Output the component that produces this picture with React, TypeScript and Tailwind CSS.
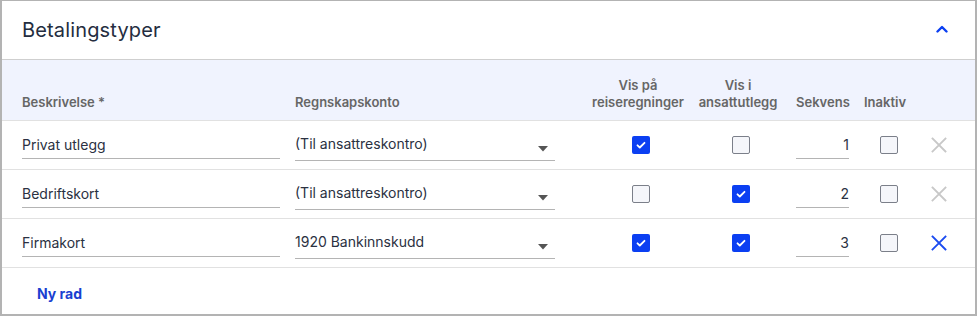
const rows = [
  { name: 'Privat utlegg', account: '(Til ansattreskontro)', travel: true, expense: false, seq: 1, inactive: false, removable: false },
  { name: 'Bedriftskort', account: '(Til ansattreskontro)', travel: false, expense: true, seq: 2, inactive: false, removable: false },
  { name: 'Firmakort', account: '1920 Bankinnskudd', travel: true, expense: true, seq: 3, inactive: false, removable: true },
]

function Checkbox({ checked }: { checked: boolean }) {
  if (checked) {
    return (
      <span className="w-[18px] h-[18px] rounded-[2px] bg-[#0b3ff2] flex items-center justify-center">
        <svg width="12" height="12" viewBox="0 0 12 12" fill="none">
          <path d="M2.5 6.3l2.3 2.2 4.7-4.7" stroke="white" strokeWidth="1.8" strokeLinecap="round" strokeLinejoin="round" />
        </svg>
      </span>
    )
  }
  return <span className="w-[18px] h-[18px] rounded-[2px] bg-[#f5f6fa] border border-[#7b7f89]" />
}

function CloseIcon({ active }: { active: boolean }) {
  return (
    <svg width="16" height="16" viewBox="0 0 16 16" fill="none">
      <path
        d="M1.5 1.5l13 13M14.5 1.5l-13 13"
        stroke={active ? '#1b4bf0' : '#c8c8c8'}
        strokeWidth="1.8"
        strokeLinecap="square"
      />
    </svg>
  )
}

export default function App() {
  return (
    <div className="w-[978px] h-[317px] bg-white" style={{ fontFamily: 'Inter, "Noto Sans", sans-serif' }}>
      <div className="w-[977px] h-[316px] border-x-2 border-b-2 border-t border-[#b3b3b3] flex flex-col">
        {/* Header */}
        <div className="h-[59px] border-b border-[#cfcfcf] flex items-center justify-between pl-5 pr-[27px]">
          <h1 className="text-[20px] text-[#242d40] tracking-[0.15px]">Betalingstyper</h1>
          <svg width="12" height="8" viewBox="0 0 12 8" fill="none" className="-mt-[3px]">
            <path d="M1.5 6.5L6 2l4.5 4.5" stroke="#0b3ff2" strokeWidth="2.4" strokeLinecap="round" strokeLinejoin="round" />
          </svg>
        </div>

        {/* Column headings */}
        <div className="h-[61px] bg-[#f0f3fe] border-b border-[#e1e1e1] flex items-end pb-[9px] pl-[20px] text-[13px] font-semibold text-[#666] leading-[17px]">
          <div className="w-[258px]">Beskrivelse *</div>
          <div className="w-[260px] ml-[15px]">Regnskapskonto</div>
          <div className="w-[108px] ml-[29px] text-center">
            Vis på
            <br />
            reiseregninger
          </div>
          <div className="w-[94px] ml-[-1px] text-center">
            Vis i
            <br />
            ansattutlegg
          </div>
          <div className="w-[56px] ml-[11px]">Sekvens</div>
          <div className="w-[50px] ml-[12px]">Inaktiv</div>
        </div>

        {/* Rows */}
        {rows.map((r) => (
          <div key={r.name} className="h-[49px] border-b border-[#e1e1e1] flex items-center pl-[20px] text-[14px] text-[#2b3142]">
            <div className="w-[258px] h-[27px] border-b border-[#b4b4b4] flex items-center">{r.name}</div>
            <div className="w-[260px] ml-[15px] h-[29px] mt-[2px] border-b border-[#b4b4b4] flex items-start justify-between pt-[1px]">
              <span>{r.account}</span>
              <svg width="10" height="6" viewBox="0 0 10 6" className="mt-[13px] mr-[7px]">
                <path d="M0 0h10L5 5.5z" fill="#555" />
              </svg>
            </div>
            <div className="w-[108px] ml-[29px] flex justify-center pl-[6px]">
              <Checkbox checked={r.travel} />
            </div>
            <div className="w-[94px] ml-[-1px] flex justify-center pl-[6px]">
              <Checkbox checked={r.expense} />
            </div>
            <div className="w-[53px] ml-[11px] h-[27px] border-b border-[#b4b4b4] flex items-center justify-end">{r.seq}</div>
            <div className="w-[50px] ml-[15px] flex justify-center">
              <Checkbox checked={r.inactive} />
            </div>
            <div className="ml-[17px] flex items-center">
              <CloseIcon active={r.removable} />
            </div>
          </div>
        ))}

        {/* Footer */}
        <div className="flex-1 flex items-center pl-[35px] pt-[5px]">
          <button className="text-[14px] font-bold text-[#1a3fd1]">Ny rad</button>
        </div>
      </div>
    </div>
  )
}
